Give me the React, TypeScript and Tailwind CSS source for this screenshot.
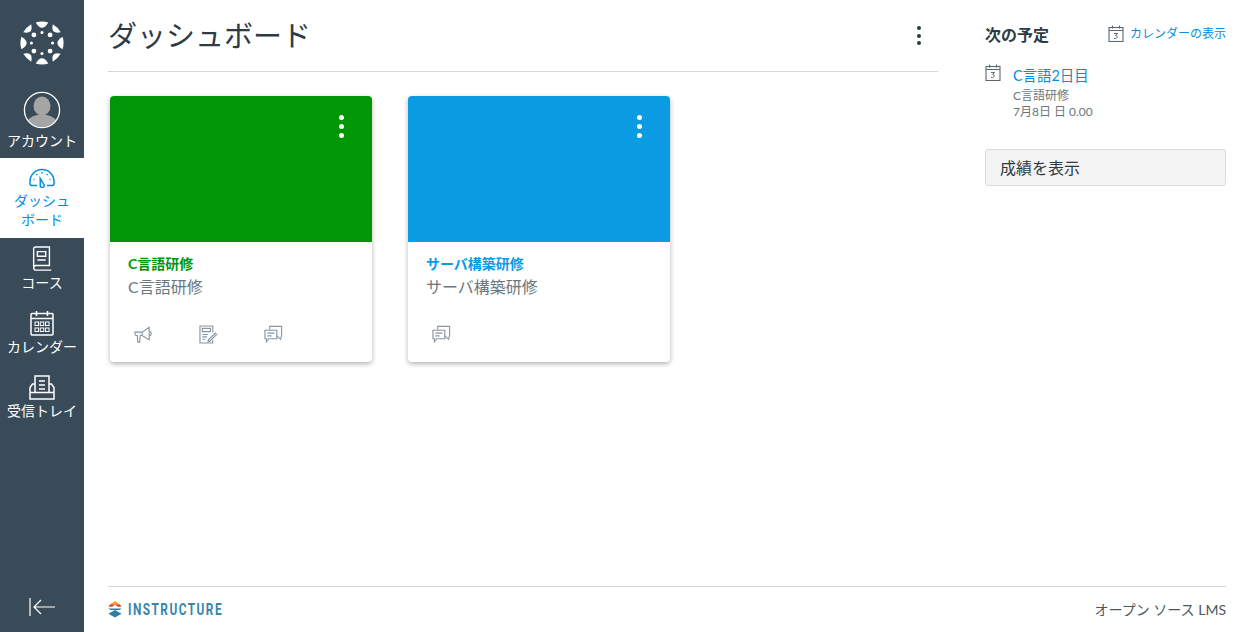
import type { ReactNode } from "react";

const jp = "font-['Lato','Noto_Sans_CJK_JP',sans-serif]";

function polar(r: number, deg: number) {
  const a = ((deg - 90) * Math.PI) / 180;
  return [50 + r * Math.cos(a), 50 + r * Math.sin(a)];
}

function CanvasLogo() {
  const angles = [0, 45, 90, 135, 180, 225, 270, 315];
  return (
    <svg viewBox="0 0 100 100" className="w-[44px] h-[44px]" fill="#fff">
      {angles.map((d) => {
        const half = d % 90 === 0 ? 17 : 15;
        const [x1, y1] = polar(49, d - half);
        const [x2, y2] = polar(49, d + half);
        const [x3, y3] = polar(d % 90 === 0 ? 23 : 27, d);
        return <path key={d} d={`M${x1} ${y1}A49 49 0 0 1 ${x2} ${y2}Q${x3} ${y3} ${x1} ${y1}Z`} />;
      })}
      {angles.map((d) => {
        const [x, y] = polar(d % 90 === 0 ? 24 : 26, d);
        return <circle key={d} cx={x} cy={y} r={d % 90 === 0 ? 3.500 : 5.500} />;
      })}
    </svg>
  );
}

function Avatar() {
  return (
    <svg viewBox="0 0 38 38" className="w-[38px] h-[38px]">
      <defs>
        <clipPath id="av">
          <circle cx="19" cy="19" r="17" />
        </clipPath>
      </defs>
      <circle cx="19" cy="19" r="17.2" fill="#394b58" />
      <g clipPath="url(#av)" fill="#a5a5a5">
        <ellipse cx="19" cy="15" rx="8.500" ry="9.500" />
        <path d="M2 38c0-9 5-12 12-14h10c7 2 12 5 12 14z" />
      </g>
      <circle cx="19" cy="19" r="17.600" fill="none" stroke="#fff" strokeWidth="1.300" />
    </svg>
  );
}

function GaugeIcon() {
  return (
    <svg viewBox="0 0 26 20" className="w-[26px] h-[20px]" fill="none" stroke="#008ee2" strokeWidth="1.500">
      <path d="M8 17.500H3C.5 17.500 1 15 1 13.500a12 12 0 0 1 24 0c0 1.500.5 4-2 4h-5" />
      <path d="M11.200 10.500l3.300 5.500a2 2 0 1 1-3.200 1z" />
      <path d="M13 4v1.500M7.500 6l.8 1M18.500 6l-.8 1M4.500 11.500h1M20.500 11.500h1" />
    </svg>
  );
}

function BookIcon() {
  return (
    <svg viewBox="0 0 22 28" className="w-[22px] h-[26px]" fill="none" stroke="#fff" strokeWidth="1.500">
      <path d="M2 22V3a2 2 0 0 1 2-2h15v20H4.500A2.500 2.500 0 0 0 2 23.500 2.500 2.500 0 0 0 4.500 26H21" />
      <path d="M6 6h9v5H6zM6 15h9" />
    </svg>
  );
}

function CalendarNavIcon() {
  return (
    <svg viewBox="0 0 24 26" className="w-[24px] h-[26px]" fill="none" stroke="#fff" strokeWidth="1.500">
      <rect x="1" y="3.500" width="22" height="21.500" rx="1" />
      <path d="M1 8.500h22M6.500 1v5M17.500 1v5" />
      <g fill="none" strokeWidth="1">
        <rect x="5" y="12" width="3.500" height="3.500" />
        <rect x="10.250" y="12" width="3.500" height="3.500" />
        <rect x="15.500" y="12" width="3.500" height="3.500" />
        <rect x="5" y="18" width="3.500" height="3.500" />
        <rect x="10.250" y="18" width="3.500" height="3.500" />
        <rect x="15.500" y="18" width="3.500" height="3.500" />
      </g>
    </svg>
  );
}

function InboxIcon() {
  return (
    <svg viewBox="0 0 26 25" className="w-[26px] h-[25px]" fill="none" stroke="#fff" strokeWidth="1.500">
      <path d="M6 17V1h14v16" />
      <path d="M6 9H3.500L1 12.500V24h24V12.500L22.500 9H20" />
      <path d="M1 17.500h24M10 6h6M10 10h6M10 14h6" />
    </svg>
  );
}

function NavItem({ icon, label }: { icon: ReactNode; label: string }) {
  return (
    <a className="flex flex-col items-center h-[64px] pt-[8px] text-white text-[14px] leading-[20px]">
      <div className="h-[26px] flex items-center justify-center">{icon}</div>
      <span className="mt-[1px] whitespace-nowrap">{label}</span>
    </a>
  );
}

function Megaphone() {
  return (
    <svg viewBox="0 0 20 20" className="w-[19px] h-[19px]" fill="none" stroke="#8b969e" strokeWidth="1.200">
      <path d="M1 7.500h7.500L16 2.500v13L8.500 11H6.500l-.5 7H4l-.5-7H2.500A1.500 1.500 0 0 1 1 9.500z" />
      <path d="M16 6.500c3 .5 3 4.500 0 5M8.500 7.500V11" />
    </svg>
  );
}

function Assignment() {
  return (
    <svg viewBox="0 0 20 20" className="w-[19px] h-[19px]" fill="none" stroke="#8b969e" strokeWidth="1.200">
      <path d="M14.500 8V1H1v18h13.500v-3" />
      <path d="M3.500 3.500h8.500v3.500H3.500zM3.500 10h6M3.500 12.500h5M3.500 15h3" />
      <path d="M10 15.500l-.5 2 2-.5 7-7-1.500-1.500z" />
    </svg>
  );
}

function Discussion() {
  return (
    <svg viewBox="0 0 20 20" className="w-[19px] h-[19px]" fill="none" stroke="#8b969e" strokeWidth="1.200">
      <path d="M6 5V1.500h12.500V11l-1 4-4-3.500" />
      <path d="M1 5.500h12.500v9H5l-2.500 3v-3H1z" />
      <path d="M3.500 8.500h7.500M3.500 11.500h4.500" />
    </svg>
  );
}

function SmallCalendar() {
  return (
    <svg viewBox="0 0 16 17" className="w-[16px] h-[17px] shrink-0" fill="none" stroke="#5b6770" strokeWidth="1.100">
      <rect x="1" y="2.500" width="14" height="14" />
      <path d="M1 5.500h14M4.500 .5v3M11.500 .5v3" />
      <path d="M6 8.500h3.500L7.500 10.500c2.500 0 2.500 3.500-1.500 3" strokeWidth="1" />
    </svg>
  );
}

function Kebab({ dot, gap }: { dot: string; gap: string }) {
  return (
    <div className={`flex flex-col ${gap}`}>
      <span className={`rounded-full ${dot}`} />
      <span className={`rounded-full ${dot}`} />
      <span className={`rounded-full ${dot}`} />
    </div>
  );
}

function CourseCard({
  title,
  hero,
  text,
  icons,
}: {
  title: string;
  hero: string;
  text: string;
  icons: ReactNode[];
}) {
  return (
    <div className="w-[262px] h-[266px] rounded-[4px] bg-white shadow-[0_2px_5px_rgba(0,0,0,0.3)] overflow-hidden">
      <div className={`h-[146px] flex justify-end pt-[19px] pr-[28px] ${hero}`}>
        <Kebab dot="w-[5px] h-[5px] bg-white" gap="gap-[4px]" />
      </div>
      <div className="pl-[18px] pt-[13px]">
        <div className={`text-[14px] leading-[18px] font-bold ${text}`}>{title}</div>
        <div className="text-[16px] leading-[22px] mt-[3px] text-[#6b7780]">{title}</div>
      </div>
      <div className="flex pl-[24px] gap-[46px] mt-[27px]">{icons}</div>
    </div>
  );
}

export default function App() {
  return (
    <div className={`flex h-[632px] w-[1250px] overflow-hidden bg-white ${jp}`}>
      <nav className="w-[84px] shrink-0 bg-[#394b58] flex flex-col">
        <div className="h-[86px] flex items-center justify-center">
          <CanvasLogo />
        </div>
        <a className="h-[72px] flex flex-col items-center pt-[5px] text-white text-[14px] leading-[20px]">
          <Avatar />
          <span className="mt-[2px] whitespace-nowrap">アカウント</span>
        </a>
        <a className="h-[80px] bg-white flex flex-col items-center pt-[10px] text-[#008ee2] text-[14px] leading-[19px]">
          <GaugeIcon />
          <span className="mt-[3px] text-center w-[60px]">ダッシュボード</span>
        </a>
        <NavItem icon={<BookIcon />} label="コース" />
        <NavItem icon={<CalendarNavIcon />} label="カレンダー" />
        <NavItem icon={<InboxIcon />} label="受信トレイ" />
        <div className="mt-auto h-[50px] flex items-center justify-center">
          <svg viewBox="0 0 26 20" className="w-[26px] h-[20px]" fill="none" stroke="#fff" strokeWidth="1.200">
            <path d="M1 1v18M26 10H5M12 3l-7 7 7 7" />
          </svg>
        </div>
      </nav>

      <div className="flex-1 min-w-0 flex flex-col pl-[24px] pr-[24px]">
        <div className="flex-1 flex min-h-0">
          <main className="w-[830px] shrink-0">
            <header className="h-[72px] flex items-start justify-between border-b border-[#d6d6d6]">
              <h1 className="text-[29px] leading-[36px] mt-[18px] text-[#2d3b45]">ダッシュボード</h1>
              <div className="mt-[26px] mr-[17px]">
                <Kebab dot="w-[4px] h-[4px] bg-[#2d3b45]" gap="gap-[3.500px]" />
              </div>
            </header>
            <div className="flex gap-[36px] mt-[24px] pl-[2px]">
              <CourseCard
                title="C言語研修"
                hero="bg-[#009606]"
                text="text-[#009606]"
                icons={[<Megaphone key="m" />, <Assignment key="a" />, <Discussion key="d" />]}
              />
              <CourseCard
                title="サーバ構築研修"
                hero="bg-[#0b9be3]"
                text="text-[#0b9be3]"
                icons={[<Discussion key="d" />]}
              />
            </div>
          </main>

          <aside className="ml-[47px] flex-1 min-w-0">
            <div className="flex items-center justify-between mt-[23px] h-[24px]">
              <h2 className="text-[16px] font-bold text-[#2d3b45]">次の予定</h2>
              <a className="flex items-center gap-[6px] text-[12px] text-[#008ee2] -mt-[3px]">
                <SmallCalendar />
                カレンダーの表示
              </a>
            </div>
            <div className="flex mt-[17px]">
              <SmallCalendar />
              <div className="ml-[12px]">
                <div className="text-[14.400px] leading-[20px] mt-[2px] text-[#008ee2]">C言語2日目</div>
                <div className="text-[12px] leading-[16px] text-[#6b7780] mt-[2px]">C言語研修</div>
                <div className="text-[12px] leading-[16px] text-[#6b7780]">7月8日 日 0.00</div>
              </div>
            </div>
            <button className="mt-[29px] w-full h-[37px] text-left pl-[14px] rounded-[3px] border border-[#d8dbdf] bg-[#f4f4f4] text-[16px] text-[#2d3b45]">
              成績を表示
            </button>
          </aside>
        </div>

        <footer className="h-[46px] shrink-0 border-t border-[#d6d6d6] flex items-center justify-between">
          <div className="flex items-center gap-[6px]">
            <svg viewBox="0 0 14 18" className="w-[14px] h-[17px]">
              <path d="M7 0l5 3.500H2z" fill="#f5a623" />
              <path d="M2 3.500h10L14 6h-4L7 4 4 6H0z" fill="#e8452c" />
              <path d="M0 8h14l-2 1.500H2z" fill="#2d7fa5" />
              <path d="M7 9.500l7 4-7 4-7-4z" fill="#2d7fa5" />
            </svg>
            <span className="font-['Roboto',sans-serif] font-bold text-[16px] tracking-[2px] leading-none text-[#3a86ab] scale-x-[0.74] origin-left mt-[1px]">
              INSTRUCTURE
            </span>
          </div>
          <span className="text-[14px] text-[#4a5660]">オープン ソース LMS</span>
        </footer>
      </div>
    </div>
  );
}
